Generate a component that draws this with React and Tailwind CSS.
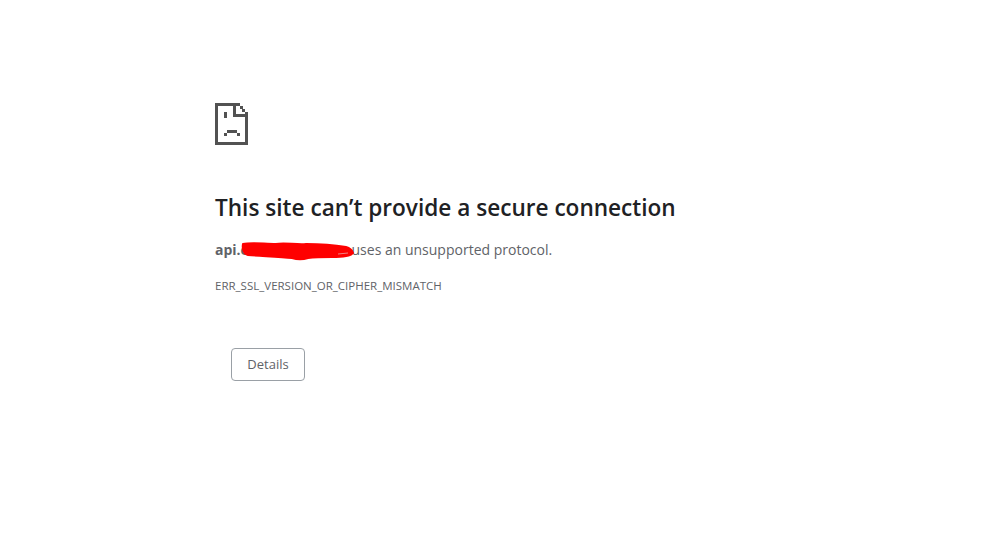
export default function App() {
  return (
    <div className="min-h-screen bg-white pl-[215px] pt-[103px] font-['Open_Sans','Noto_Sans',sans-serif] text-[#5f6368]">
      {/* Sad page icon */}
      <svg width="33" height="42" viewBox="0 0 33 42" shapeRendering="crispEdges" className="block">
        <g fill="#525252">
          <rect x="0" y="0" width="25" height="3" />
          <rect x="0" y="0" width="3" height="42" />
          <rect x="0" y="39" width="33" height="3" />
          <rect x="30" y="9" width="3" height="32" />
          <rect x="18" y="0" width="3" height="14" />
          <rect x="18" y="11" width="15" height="3" />
          <rect x="25" y="3" width="3" height="3" />
          <rect x="27" y="6" width="3" height="3" />
          <rect x="9" y="9" width="3" height="6" />
          <rect x="12" y="27" width="10" height="3" />
          <rect x="9" y="30" width="3" height="3" />
          <rect x="22" y="30" width="3" height="3" />
        </g>
      </svg>

      <h1 className="mt-[47px] text-[22.6px] leading-[32px] font-semibold text-[#202124]">
        This site can’t provide a secure connection
      </h1>

      <p className="relative mt-[14px] text-[14px] leading-[24px]">
        <strong className="font-bold">api.example-h.com</strong> uses an unsupported protocol.
        {/* red scribble that hides the host name */}
        <svg width="118" height="22" viewBox="0 0 118 22" className="absolute left-[25px] top-[3px]">
          <path
            d="M3 3 C12 1 24 3 36 3 C44 1 56 4 66 3 C80 3 94 4 106 6 C110 7 112 9 113 12 C111 15 104 16 92 16 C84 16 76 16 68 17 C62 19 58 19 52 17 C40 16 22 15 8 14 C4 13 2 8 3 3 Z"
            fill="#fe0000"
            stroke="#fe0000"
            strokeWidth="2"
            strokeLinejoin="round"
          />
          <path d="M98 13 L108 12" stroke="#f08080" strokeWidth="1" fill="none" />
        </svg>
      </p>

      <div className="mt-[16px] text-[11.5px] leading-[16px] uppercase">ERR_SSL_VERSION_OR_CIPHER_MISMATCH</div>

      <button className="ml-4 mt-[54px] block h-[33px] w-[74px] rounded-[4px] border border-[#9aa0a6] bg-white text-[13px] font-medium text-[#5f6368]">
        Details
      </button>
    </div>
  );
}
